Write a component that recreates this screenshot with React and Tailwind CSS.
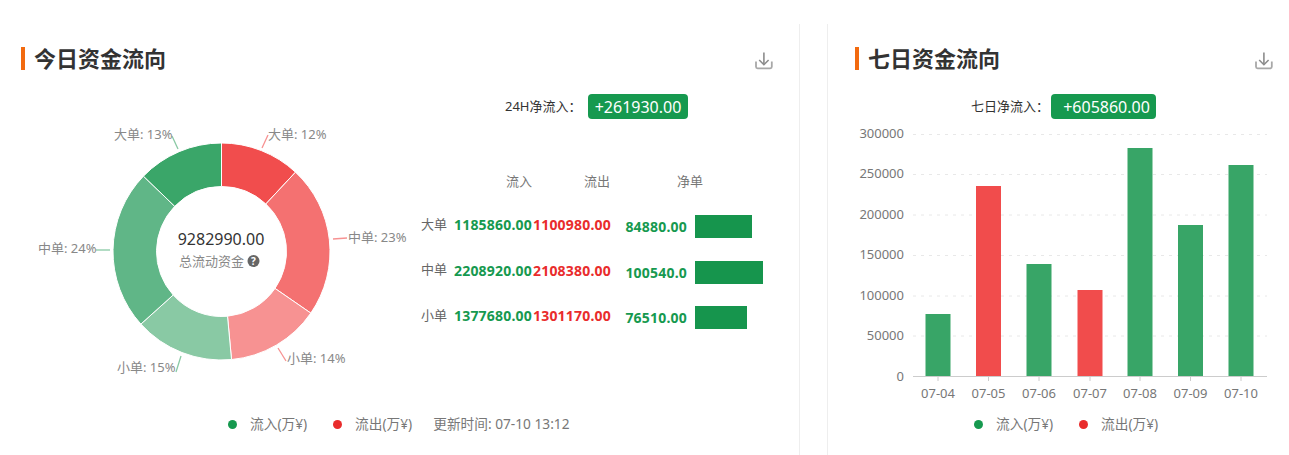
import React from "react";

const FONT = "font-['Noto_Sans','Noto_Sans_CJK_SC',sans-serif]";

function polar(r, deg) {
  const a = (deg * Math.PI) / 180;
  return [221.5 + r * Math.sin(a), 251.5 - r * Math.cos(a)];
}

function slice(a0, a1, R = 108.5, r = 65) {
  const [x0, y0] = polar(R, a0);
  const [x1, y1] = polar(R, a1);
  const [x2, y2] = polar(r, a1);
  const [x3, y3] = polar(r, a0);
  const large = a1 - a0 > 180 ? 1 : 0;
  return `M${x0} ${y0}A${R} ${R} 0 ${large} 1 ${x1} ${y1}L${x2} ${y2}A${r} ${r} 0 ${large} 0 ${x3} ${y3}Z`;
}

const slices = [
  [0, 43, "#f14d4d"],
  [43, 124.6, "#f47171"],
  [124.6, 174.7, "#f79292"],
  [174.7, 228, "#89c9a4"],
  [228, 314, "#60b687"],
  [314, 360, "#3aa669"],
];

const leaders = [
  ["M172 136L178 149", "#89c9a4"],
  ["M268 135L262 148", "#f79292"],
  ["M333 239L347 238", "#f79292"],
  ["M96 250L110 250", "#89c9a4"],
  ["M278 348L286 361", "#f79292"],
  ["M181 356L176 372", "#89c9a4"],
];

const labels = [
  ["大单: 13%", 114, 139],
  ["大单: 12%", 268, 139],
  ["中单: 23%", 348, 242],
  ["中单: 24%", 38, 253],
  ["小单: 14%", 287, 363],
  ["小单: 15%", 117, 372],
];

function Donut() {
  return (
    <svg viewBox="21 120 400 270" className="w-[400px] h-[270px] mt-[26px] shrink-0">
      {slices.map(([a, b, c]) => (
        <path key={a} d={slice(a, b)} fill={c} stroke="#ffffff" strokeWidth="1" />
      ))}
      {leaders.map(([d, c]) => (
        <path key={d} d={d} fill="none" stroke={c} strokeWidth="1.3" />
      ))}
      {labels.map(([t, x, y]) => (
        <text key={t} x={x} y={y} fontSize="13" fill="#888888">{t}</text>
      ))}
      <text x="221" y="245" fontSize="16" fill="#333333" textAnchor="middle">9282990.00</text>
      <text x="179" y="266" fontSize="13" fill="#888888">总流动资金</text>
      <circle cx="253.5" cy="261" r="6" fill="#666666" />
      <text x="253.5" y="264.5" fontSize="10" fontWeight="700" fill="#ffffff" textAnchor="middle">?</text>
    </svg>
  );
}

const bars = [
  ["07-04", 938, 314, "#38a567"],
  ["07-05", 988.5, 186, "#f14c4c"],
  ["07-06", 1039, 264, "#38a567"],
  ["07-07", 1090, 290, "#f14c4c"],
  ["07-08", 1140, 148, "#38a567"],
  ["07-09", 1190.5, 225, "#38a567"],
  ["07-10", 1241, 165, "#38a567"],
];

const ticks = [
  ["300000", 134.5],
  ["250000", 174.5],
  ["200000", 215],
  ["150000", 255.5],
  ["100000", 296],
  ["50000", 336],
];

function BarChart() {
  return (
    <svg viewBox="855 119 430 285" className="w-[430px] h-[285px] shrink-0">
      {ticks.map(([t, y]) => (
        <g key={t}>
          <path d={`M913 ${y}H1267`} stroke="#e8e8e8" strokeWidth="1" strokeDasharray="3 5" />
          <text x="904" y={y + 3.5} fontSize="13" fill="#777777" textAnchor="end">{t}</text>
        </g>
      ))}
      <text x="904" y="380.5" fontSize="13" fill="#777777" textAnchor="end">0</text>
      {bars.map(([d, x, top, c]) => (
        <g key={d}>
          <rect x={x - 12.5} y={top} width="25" height={376.5 - top} fill={c} />
          <path d={`M${x} 376.5V381`} stroke="#cccccc" strokeWidth="1" />
          <text x={x} y="398" fontSize="13" fill="#777777" textAnchor="middle">{d}</text>
        </g>
      ))}
      <path d="M913 376.5H1267" stroke="#cccccc" strokeWidth="1" />
    </svg>
  );
}

function DownloadIcon() {
  return (
    <svg viewBox="0 0 18 18" className="w-[18px] h-[18px] mt-[5px]" fill="none" stroke="#8c8c8c" strokeWidth="1.6">
      <path d="M8.9 0.5V12.5" />
      <path d="M4.2 8L8.9 12.7L13.6 8" />
      <path d="M1 9.5V14.8C1 15.8 1.6 16.3 2.6 16.3H15.2C16.2 16.3 16.8 15.8 16.8 14.8V9.5" stroke="#a8a8a8" strokeWidth="1.8" />
    </svg>
  );
}

function Header({ title, width }) {
  return (
    <div className={`flex items-center justify-between h-[23px] mb-[24px] ${width}`}>
      <h2 className="border-l-4 border-[#f26a0f] pl-[9px] text-[22px] leading-[23px] font-bold text-[#333333]">
        {title}
      </h2>
      <DownloadIcon />
    </div>
  );
}

function Pill({ children, width }) {
  return (
    <span className={`flex items-center justify-center h-[25px] rounded-[4px] bg-[#16994f] text-white text-[16px] ${width}`}>
      {children}
    </span>
  );
}

function LegendItem({ color, children }) {
  return (
    <span className="flex items-center gap-[13px]">
      <span className={`w-[9px] h-[9px] rounded-full ${color}`} />
      <span>{children}</span>
    </span>
  );
}

const rows = [
  ["大单", "1185860.00", "1100980.00", "84880.00", "w-[57px]"],
  ["中单", "2208920.00", "2108380.00", "100540.0", "w-[68px]"],
  ["小单", "1377680.00", "1301170.00", "76510.00", "w-[52px]"],
];

export default function App() {
  return (
    <div className={`${FONT} w-[1289px] h-[455px] bg-white pt-[24px] flex overflow-hidden`}>
      <section className="w-[800px] h-full border-r border-[#eeeeee] pt-[23px] pl-[21px] shrink-0">
        <Header title="今日资金流向" width="w-[752px]" />
        <div className="flex h-[296px]">
          <Donut />
          <div className="flex-1">
            <div className="flex items-center pl-[84px] gap-[10px] text-[13px] text-[#333333]">
              <span className="w-[73px] whitespace-nowrap">24H净流入：</span>
              <Pill width="w-[100px]">+261930.00</Pill>
            </div>
            <div className="flex pl-[85px] mt-[53px] h-[20px] items-center text-[13px] text-[#777777]">
              <span className="w-[78px]">流入</span>
              <span className="w-[93px]">流出</span>
              <span>净单</span>
            </div>
            <div className="mt-[23px] flex flex-col gap-[22.6px]">
              {rows.map(([name, i, o, n, w]) => (
                <div key={name} className="grid grid-cols-[33px_79px_77px_77px_1fr] items-center h-[23px] text-[14px] tracking-[0.2px]">
                  <span className="text-[13px] tracking-normal text-[#666666] -mt-[4px]">{name}</span>
                  <span className="font-bold text-[#16994f] -mt-[4px] whitespace-nowrap">{i}</span>
                  <span className="font-bold text-[#e92c2c] -mt-[4px] whitespace-nowrap">{o}</span>
                  <span className="font-bold text-[#16994f] text-right whitespace-nowrap">{n}</span>
                  <span className={`h-[23px] ml-[8px] bg-[#16954d] ${w}`} />
                </div>
              ))}
            </div>
          </div>
        </div>
        <div className="flex items-center h-[20px] mt-[24px] pl-[207px] text-[13.7px] text-[#777777]">
          <LegendItem color="bg-[#16994f]">流入(万¥)</LegendItem>
          <span className="w-[26px]" />
          <LegendItem color="bg-[#e92c2c]">流出(万¥)</LegendItem>
          <span className="ml-[21px]">更新时间: 07-10 13:12</span>
        </div>
      </section>
      <section className="ml-[27px] h-full border-l border-[#eeeeee] pt-[23px] pl-[27px] flex-1 min-w-0">
        <Header title="七日资金流向" width="w-[418px]" />
        <div className="flex items-center pl-[116px] gap-[8px] text-[13px] text-[#333333]">
          <span className="w-[72px] whitespace-nowrap">七日净流入：</span>
          <Pill width="w-[105px]"><span className="pl-[6px]">+605860.00</span></Pill>
        </div>
        <BarChart />
        <div className="flex items-center h-[20px] mt-[10px] pl-[119px] text-[13.7px] text-[#777777]">
          <LegendItem color="bg-[#16994f]">流入(万¥)</LegendItem>
          <span className="w-[26px]" />
          <LegendItem color="bg-[#e92c2c]">流出(万¥)</LegendItem>
        </div>
      </section>
    </div>
  );
}
